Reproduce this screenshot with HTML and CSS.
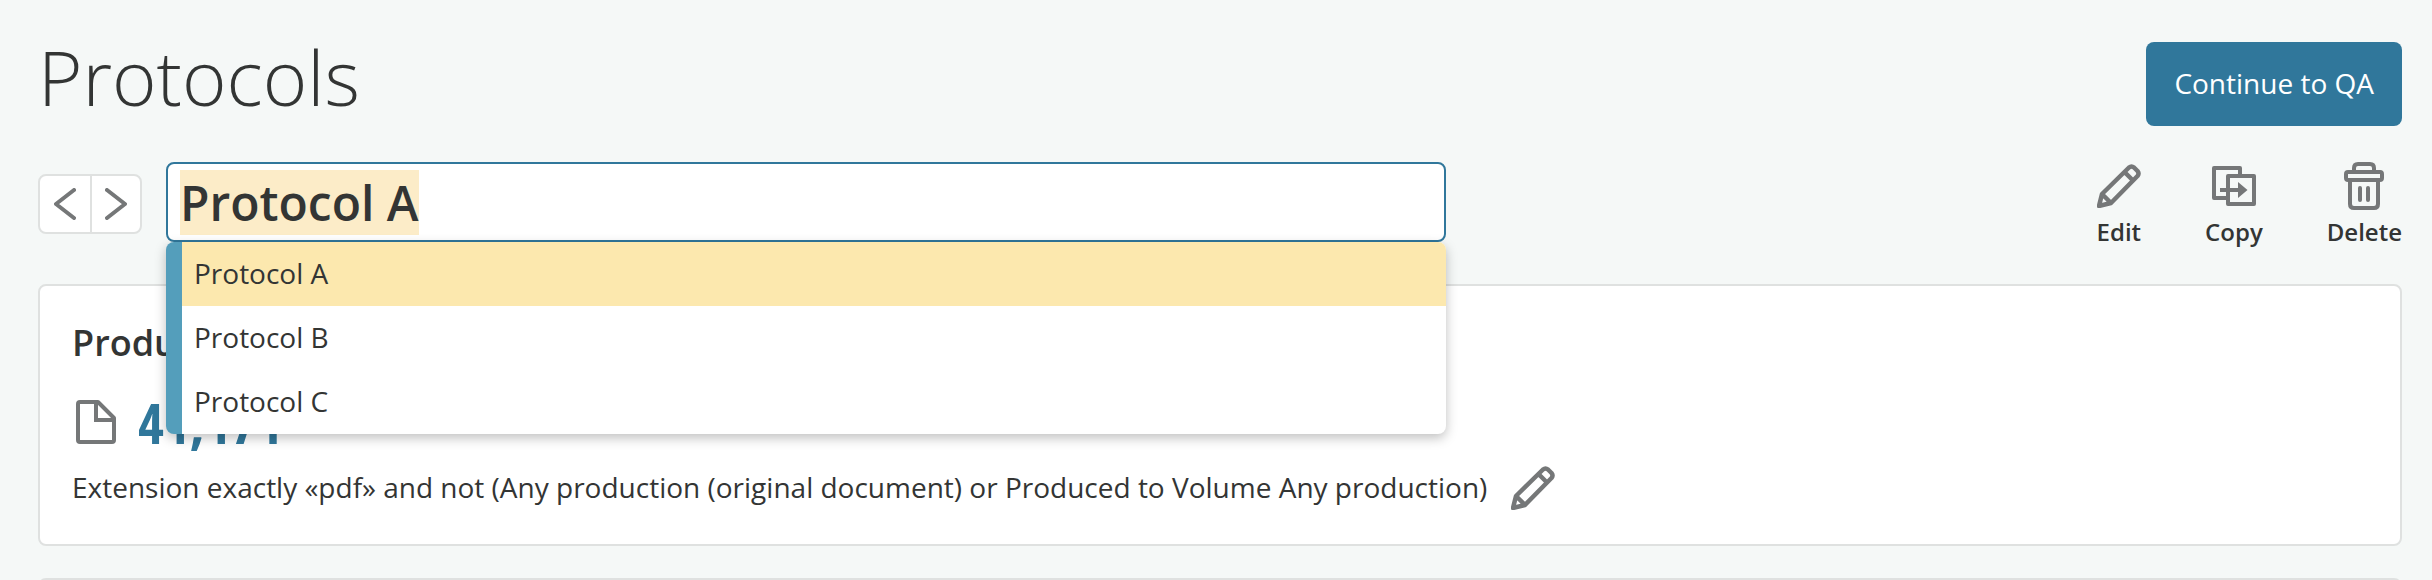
FILE: index.html
```html
<!DOCTYPE html>
<html lang="en">
<head>
    <meta charset="UTF-8">
    <meta name="viewport" content="width=device-width, initial-scale=1.0">
    <title>Protocols</title>
    <link rel="stylesheet" href="styles.css">
</head>
<body>
    <!-- Shared icon -->
    <svg class="sprite" aria-hidden="true">
        <symbol id="icon-pencil" viewBox="0 0 44 44">
            <path d="M2 42 L5 30 L32 3.500 Q34.500 1.500 37 3.500 L40.500 7 Q42.500 9.500 40.500 12 L14 39 Z M5 30 L14 39 M27.500 8 L36 16.500" fill="none" stroke="currentColor" stroke-width="4.500" stroke-linejoin="round"/>
        </symbol>
    </svg>

    <header class="page-header">
        <h1>Protocols</h1>
        <button type="button" class="continue-button">Continue to QA</button>
    </header>

    <main>
        <div class="toolbar">
            <!-- Previous / next protocol -->
            <div class="pager">
                <button type="button" aria-label="Previous protocol">
                    <svg width="22" height="32" viewBox="0 0 22 32"><path d="M20 2 L2 16 L20 30"/></svg>
                </button>
                <button type="button" aria-label="Next protocol">
                    <svg width="22" height="32" viewBox="0 0 22 32"><path d="M2 2 L20 16 L2 30"/></svg>
                </button>
            </div>

            <!-- Protocol picker -->
            <div class="picker">
                <input type="text" id="protocol-name" class="picker-input" value="Protocol A" aria-label="Protocol" autocomplete="off" spellcheck="false">
                <div class="picker-menu">
                    <button type="button" class="picker-option active">Protocol A</button>
                    <button type="button" class="picker-option">Protocol B</button>
                    <button type="button" class="picker-option">Protocol C</button>
                </div>
            </div>

            <div class="actions">
                <button type="button">
                    <svg width="44" height="48" viewBox="0 0 44 48"><use href="#icon-pencil" y="2" width="44" height="44"/></svg>
                    Edit
                </button>
                <button type="button">
                    <svg width="44" height="48" viewBox="0 0 44 48" fill="none" stroke="currentColor" stroke-width="4" stroke-linejoin="round">
                        <path d="M28 13 V6 H2 V36 H15"/>
                        <path d="M16 14 H42 V42 H16 Z"/>
                        <path d="M8 28 H27"/>
                        <path d="M26 20 L35.500 28 L26 36 Z" fill="currentColor" stroke="none"/>
                    </svg>
                    Copy
                </button>
                <button type="button">
                    <svg width="40" height="48" viewBox="0 0 40 48" fill="none" stroke="currentColor" stroke-width="4" stroke-linecap="round" stroke-linejoin="round">
                        <path d="M10 9 V6 Q10 2 14 2 H26 Q30 2 30 6 V9"/>
                        <rect x="2" y="10" width="36" height="8" rx="2"/>
                        <path d="M6 19 V42 Q6 46 10 46 H30 Q34 46 34 42 V19"/>
                        <path d="M16 26 V38 M24 26 V38"/>
                    </svg>
                    Delete
                </button>
            </div>
        </div>

        <section class="card">
            <h2>Produced</h2>
            <div class="doc-count">
                <svg width="40" height="44" viewBox="0 0 40 44" fill="none" stroke="currentColor" stroke-width="4" stroke-linejoin="round">
                    <path d="M4 2 H22 L38 18 V40 Q38 42 36 42 H4 Q2 42 2 40 V4 Q2 2 4 2 Z"/>
                    <path d="M20 3 V20 H37" stroke-linejoin="miter"/>
                </svg>
                <a href="#" class="count">41,171</a>
            </div>
            <div class="criteria">
                <p>Extension exactly «pdf» and not (Any production (original document) or Produced to Volume Any production)</p>
                <button type="button" aria-label="Edit criteria">
                    <svg width="44" height="44"><use href="#icon-pencil" width="44" height="44"/></svg>
                </button>
            </div>
        </section>

        <section class="card"></section>
    </main>

<script>
    // Open with the current name selected so typing replaces it
    let nameInput = document.getElementById('protocol-name');
    nameInput.focus();
    nameInput.select();
</script>
</body>
</html>
```
FILE: styles.css
```css
:root {
    --bg-color: #f5f8f7;
    --fg-color: #333534;
    --icon-color: #757778;
    --border-color: #dfe1e0;
    --primary: #30779b;
    --accent: #549ebb;
    --option-bg: #fce8ae;
    --selection-bg: #fcecc8;
}

* {
    box-sizing: border-box;
}
body {
    font-family: 'Open Sans', 'Noto Sans', sans-serif;
    font-size: 28px;
    line-height: 40px;
    background-color: var(--bg-color);
    color: var(--fg-color);
    margin: 0;
    padding: 42px 30px 0 38px;
}
h1, h2, p {
    margin: 0;
}
button {
    font: inherit;
    color: inherit;
    background: none;
    border: none;
    padding: 0;
    cursor: pointer;
}
svg {
    display: block;
    flex: none;
}
.sprite {
    position: absolute;
    width: 0;
    height: 0;
}

/* Header */
.page-header {
    display: flex;
    justify-content: space-between;
    align-items: flex-start;
    margin-bottom: 36px;
}
h1 {
    font-size: 76px;
    font-weight: 300;
    line-height: 70px;
}
.continue-button {
    background-color: var(--primary);
    color: #fff;
    padding: 21px 28px 23px;
    border-radius: 8px;
}

/* Toolbar */
.toolbar {
    display: flex;
    align-items: flex-start;
    height: 80px;
    margin-bottom: 42px;
}
.pager {
    display: flex;
    border: 2px solid var(--border-color);
    border-radius: 8px;
    background-color: #fff;
    margin: 12px 24px 0 0;
}
.pager button {
    display: flex;
    align-items: center;
    justify-content: center;
    width: 50px;
    height: 56px;
}
.pager button + button {
    border-left: 2px solid var(--border-color);
}
.pager path {
    fill: none;
    stroke: var(--icon-color);
    stroke-width: 4;
    stroke-linecap: round;
    stroke-linejoin: round;
}

/* Picker */
.picker {
    position: relative;
    flex: 0 1 1280px;
}
.picker-input {
    display: block;
    width: 100%;
    height: 80px;
    padding: 0 12px;
    border: 2px solid var(--primary);
    border-radius: 8px;
    background-color: #fff;
    color: inherit;
    font-family: inherit;
    font-size: 48px;
    font-weight: 600;
    outline: none;
}
.picker-input::selection {
    background-color: var(--selection-bg);
    color: var(--fg-color);
}
.picker-menu {
    position: absolute;
    top: 100%;
    left: 0;
    right: 0;
    z-index: 1;
    overflow: hidden;
    border-left: 16px solid var(--accent);
    border-radius: 8px;
    background-color: #fff;
    box-shadow: 0 4px 12px rgba(0, 0, 0, 0.25);
}
.picker-option {
    display: block;
    width: 100%;
    padding: 11px 12px 13px;
    text-align: left;
}
.picker-option.active {
    background-color: var(--option-bg);
}

/* Actions */
.actions {
    display: flex;
    gap: 64px;
    margin-left: auto;
}
.actions button {
    display: flex;
    flex-direction: column;
    align-items: center;
    gap: 6px;
    font-size: 24px;
    font-weight: 600;
    line-height: 32px;
}
.actions svg,
.doc-count svg,
.criteria svg {
    color: var(--icon-color);
}

/* Cards */
.card {
    min-height: 262px;
    margin-bottom: 32px;
    padding: 32px;
    border: 2px solid var(--border-color);
    border-radius: 8px;
    background-color: #fff;
}
h2 {
    font-size: 36px;
    font-weight: 600;
    line-height: 50px;
}
.doc-count {
    display: flex;
    align-items: center;
    gap: 22px;
    height: 56px;
    margin: 26px 0 16px;
    padding-left: 4px;
}
.count {
    color: var(--primary);
    font-family: 'Open Sans Condensed', 'Liberation Sans Narrow', 'Open Sans', sans-serif;
    font-size: 56px;
    font-weight: 700;
    line-height: 56px;
    text-decoration: none;
}
.criteria {
    display: flex;
    align-items: center;
    gap: 24px;
}
.criteria p {
    padding-bottom: 2px;
}
```
